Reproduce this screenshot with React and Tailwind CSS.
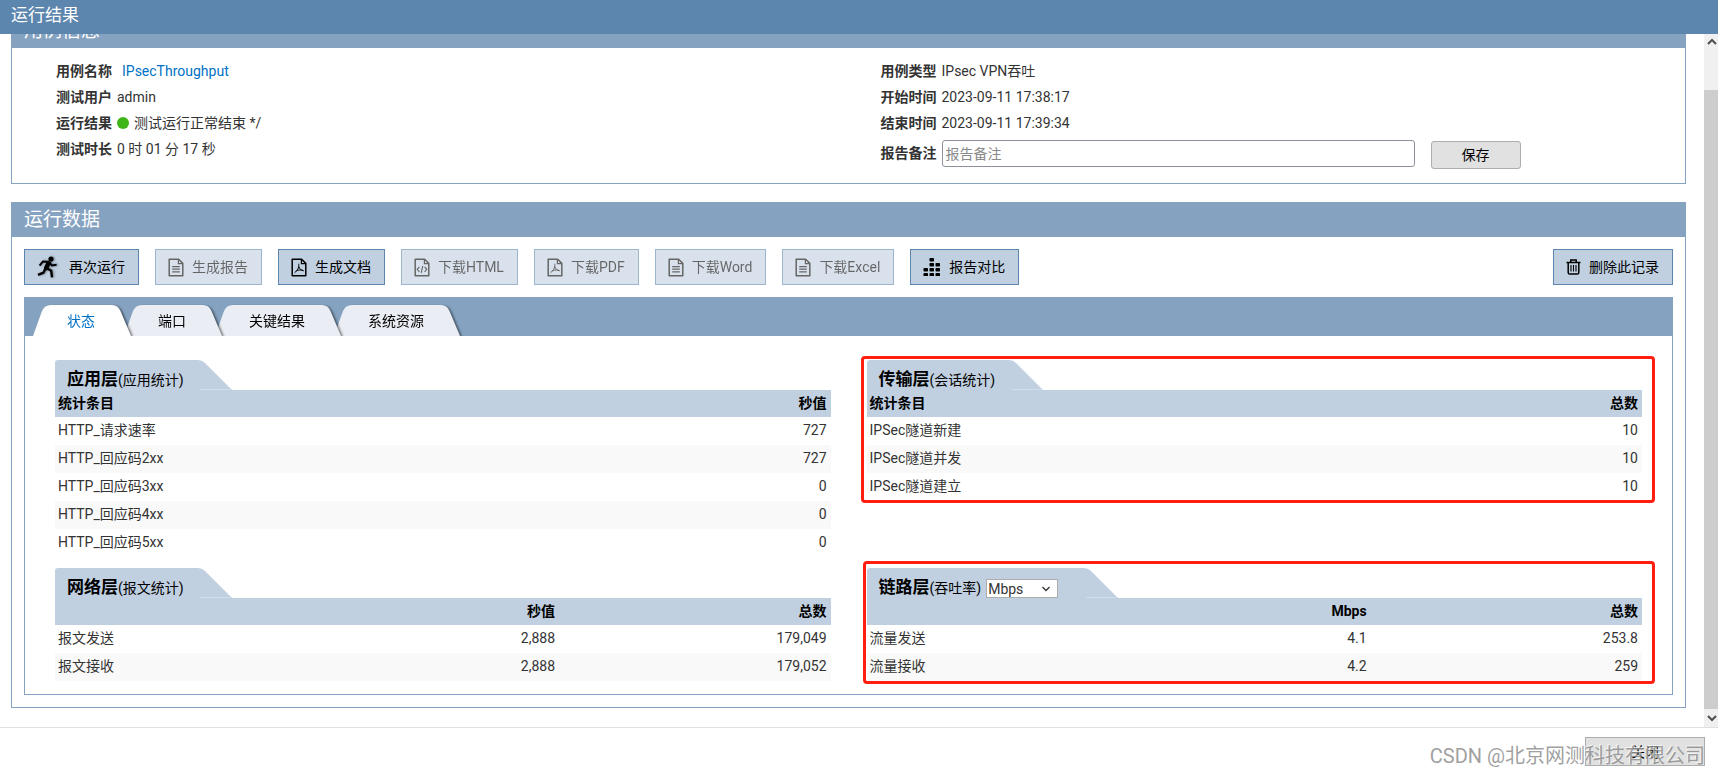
import React, { useState } from 'react';

const FileShape = ({ children }) => (
  <svg viewBox="0 0 16 19" className="h-[19px] w-4 shrink-0" fill="none" stroke="currentColor" strokeWidth="1.5">
    <path d="M1.2 1.2H10.6L14.8 5.4V17.8H1.2Z" strokeLinejoin="round" />
    <path d="M10.4 1.4V5.6H14.6" strokeWidth="1.2" />
    {children}
  </svg>
);

const DocIcon = () => (
  <FileShape>
    <path d="M4.2 8.6H11.8M4.2 11.2H11.8M4.2 13.8H11.8" strokeWidth="1.3" />
  </FileShape>
);

const PdfIcon = () => (
  <FileShape>
    <path d="M7.6 5.8C8.4 8.2 7.4 11.6 3.6 14.8M7.9 8.6C8.6 11 10.2 12.4 12.6 12.9M4.8 13.2C7 11.9 9.4 11.6 12.4 12.4" strokeWidth="1" />
  </FileShape>
);

const HtmlIcon = () => (
  <FileShape>
    <path d="M5.4 8.8L3.2 11.3L5.4 13.8M10.6 8.8L12.8 11.3L10.6 13.8M8.8 7.8L7.2 14.8" strokeWidth="1.1" />
  </FileShape>
);

const RunIcon = () => (
  <svg viewBox="0 0 24 22" className="h-[22px] w-6 shrink-0 drop-shadow-[1px_0_1px_rgba(0,0,0,0.4)]" fill="none" stroke="currentColor" strokeLinejoin="round">
    <circle cx="14" cy="3" r="2.6" fill="currentColor" stroke="none" />
    <path d="M11.6 7L9 12.2" strokeWidth="4.4" strokeLinecap="round" />
    <path d="M10.8 5.8L5.8 5.6L2.6 9.6" strokeWidth="2" />
    <path d="M12.6 6.6L14.8 9.4L19.6 8.8" strokeWidth="2" />
    <path d="M9.4 12L14.2 14.8L15 21.4" strokeWidth="2.4" />
    <path d="M8.4 12.4L6.6 16.6L1 18.8" strokeWidth="2.4" />
  </svg>
);

const bars = [[0, 10], [0, 15], [6, 0], [6, 5], [6, 10], [6, 15], [12, 5], [12, 10], [12, 15]];

const CompareIcon = () => (
  <svg viewBox="0 0 18 18" className="h-[18px] w-[18px] shrink-0" fill="currentColor">
    {bars.map(([x, y]) => (
      <rect key={`${x}-${y}`} x={x + 0.5} y={y} width="4.5" height="3.5" rx="0.8" />
    ))}
  </svg>
);

const TrashIcon = () => (
  <svg viewBox="0 0 15 16" className="h-4 w-[15px] shrink-0" fill="none" stroke="currentColor" strokeWidth="1.5">
    <path d="M0.5 3.6H14.5M4.8 3.4V1H10.2V3.4M2.2 3.8V13.4Q2.2 15 3.8 15H11.2Q12.8 15 12.8 13.4V3.8" />
    <path d="M5 6V12.6M7.5 6V12.6M10 6V12.6" strokeWidth="1.1" />
  </svg>
);

const Chevron = ({ d }) => (
  <svg viewBox="0 0 10 8" className="h-2 w-[10px]" fill="none" stroke="#505050" strokeWidth="2">
    <path d={d} />
  </svg>
);

const Panel = ({ title, children }) => (
  <section className="border border-[#85a2c0]">
    <h2 className="flex h-[34px] items-center bg-[#85a2c0] pl-3 text-[19px] text-white">{title}</h2>
    {children}
  </section>
);

const ToolButton = ({ icon, label, disabled }) => (
  <button
    disabled={disabled}
    className="flex h-9 items-center gap-2 border border-[#5c86ae] bg-[#c1d0e1] pr-[13px] pl-3 text-black disabled:opacity-60"
  >
    {icon}
    {label}
  </button>
);

const Tab = ({ label, active, onClick }) => (
  <button
    role="tab"
    aria-selected={active}
    onClick={onClick}
    className={`relative -ml-[7px] flex h-[31px] drop-shadow-[2px_1px_1px_rgba(0,0,0,0.5)] ${active ? 'text-[#0071c5]' : 'text-black'}`}
  >
    <svg viewBox="0 0 18 31" className={`h-[31px] w-[18px] ${active ? 'fill-white' : 'fill-[#eaeef4]'}`}>
      <path d="M0 31L9 6Q11.5 0 18 0V31Z" />
    </svg>
    <span className={`flex h-[31px] items-center px-4 ${active ? 'bg-white' : 'bg-[#eaeef4]'}`}>{label}</span>
    <svg viewBox="0 0 20 31" className={`h-[31px] w-5 ${active ? 'fill-white' : 'fill-[#eaeef4]'}`}>
      <path d="M0 0H1Q7 0 9.5 6L20 31H0Z" />
    </svg>
  </button>
);

const LayerTable = ({ title, note, control, columns, rows, mark }) => (
  <div className="relative self-start">
    <div className="flex h-[30px]">
      <h3 className="flex items-end rounded-tl-[3px] bg-[#c1d0e1] pl-3 text-black">
        <span className="text-[17px] leading-[22px] font-bold">{title}</span>
        <span className="leading-5">{note}</span>
        {control}
      </h3>
      <svg viewBox="0 0 48 30" className="h-[30px] w-12">
        <path d="M0 0H14Q18 0 21 3L48 30H0Z" fill="#c1d0e1" />
        <path d="M16 29.5H48" stroke="#cfdded" />
      </svg>
    </div>
    <table className="w-full table-fixed">
      <thead>
        <tr className="h-[27px] bg-[#c1d0e1] text-black">
          {columns.map((c, i) => (
            <th key={i} className="pt-0 pr-1 pb-[2px] pl-[3px] text-right font-bold first:text-left last:w-[35%]">{c}</th>
          ))}
        </tr>
      </thead>
      <tbody>
        {rows.map((row) => (
          <tr key={row[0]} className="h-7 even:bg-[#f9f9f9]">
            {row.map((cell, i) => (
              <td key={i} className="pt-0 pr-1 pb-[2px] pl-[3px] text-right first:text-left">{cell}</td>
            ))}
          </tr>
        ))}
      </tbody>
    </table>
    {mark && <div className={`pointer-events-none absolute rounded border-[3px] border-[#ff1e10] ${mark}`} />}
  </div>
);

const UnitSelect = ({ value, onChange }) => (
  <span className="relative mr-3 ml-[5px] flex">
    <select
      aria-label="吞吐率单位"
      value={value}
      onChange={(e) => onChange(e.target.value)}
      className="h-[19px] w-[72px] appearance-none border border-[#adadad] bg-white pl-px leading-4 text-[#333]"
    >
      <option>Mbps</option>
      <option>Kbps</option>
    </select>
    <svg viewBox="0 0 8 6" className="pointer-events-none absolute top-[7px] right-2 h-[6px] w-2" fill="none" stroke="#333" strokeWidth="1.3">
      <path d="M0.5 1L4 4.5L7.5 1" />
    </svg>
  </span>
);

const Field = ({ label, children }) => (
  <div className="flex h-[26px] items-center gap-[5px]">
    <span className="font-bold">{label}</span>
    {children}
  </div>
);

const tabs = ['状态', '端口', '关键结果', '系统资源'];

const App = () => {
  const [tab, setTab] = useState('状态');
  const [unit, setUnit] = useState('Mbps');

  return (
    <div className="flex h-screen flex-col bg-white font-['Roboto','Noto_Sans_CJK_SC',sans-serif] text-[14px] leading-5 text-[#333]">
      <header className="flex h-[34px] shrink-0 items-center bg-[#5c86ae] px-[11px] pb-1 text-[17px] text-white">
        <h1>运行结果</h1>
      </header>

      <div className="flex min-h-0 flex-1">
        <main className="-mt-[21px] flex-1 pr-[18px] pl-[11px] [clip-path:inset(21px_0_0_0)]">
          <Panel title="用例信息">
            <div className="grid grid-cols-2 pt-[10px] pb-[14px]">
              <div className="pl-11">
                <Field label="用例名称">
                  <a href="#case" className="ml-[5px] text-[#0071c5]">IPsecThroughput</a>
                </Field>
                <Field label="测试用户">admin</Field>
                <Field label="运行结果">
                  <span className="h-3 w-3 rounded-full bg-[#3fb618]" />
                  <span>测试运行正常结束 */</span>
                </Field>
                <Field label="测试时长">0 时 01 分 17 秒</Field>
              </div>
              <div className="pl-8">
                <Field label="用例类型">IPsec VPN吞吐</Field>
                <Field label="开始时间">2023-09-11 17:38:17</Field>
                <Field label="结束时间">2023-09-11 17:39:34</Field>
                <div className="flex items-start gap-[5px] pt-1">
                  <label htmlFor="remark" className="leading-[27px] font-bold">报告备注</label>
                  <input
                    id="remark"
                    placeholder="报告备注"
                    className="h-[27px] max-w-[473px] flex-1 rounded-[3px] border border-[#8f8f9d] px-[3px] placeholder:text-[#8a8a8a]"
                  />
                  <button className="mt-px ml-[11px] h-7 w-[90px] rounded-[3px] border border-[#adadad] bg-[#e1e1e1] text-black">保存</button>
                </div>
              </div>
            </div>
          </Panel>

          <div className="h-[18px]" />

          <Panel title="运行数据">
            <div className="p-3">
              <div className="flex gap-4">
                <ToolButton icon={<RunIcon />} label="再次运行" />
                <ToolButton icon={<DocIcon />} label="生成报告" disabled />
                <ToolButton icon={<PdfIcon />} label="生成文档" />
                <ToolButton icon={<HtmlIcon />} label="下载HTML" disabled />
                <ToolButton icon={<PdfIcon />} label="下载PDF" disabled />
                <ToolButton icon={<DocIcon />} label="下载Word" disabled />
                <ToolButton icon={<DocIcon />} label="下载Excel" disabled />
                <ToolButton icon={<CompareIcon />} label="报告对比" />
                <div className="ml-auto">
                  <ToolButton icon={<TrashIcon />} label="删除此记录" />
                </div>
              </div>

              <div className="mt-3 border border-t-0 border-[#85a2c0]">
                <div role="tablist" className="isolate flex h-[39px] items-end overflow-hidden bg-[#85a2c0] pl-[15px]">
                  {tabs.map((name, i) => (
                    <div key={name} className="relative" style={{ zIndex: tabs.length - i }}>
                      <Tab label={name} active={name === tab} onClick={() => setTab(name)} />
                    </div>
                  ))}
                </div>
                <div className="grid grid-cols-2 gap-x-9 gap-y-[11px] px-[30px] pt-6 pb-[13px]">
                  <LayerTable
                    title="应用层"
                    note="(应用统计)"
                    columns={['统计条目', '秒值']}
                    rows={[
                      ['HTTP_请求速率', '727'],
                      ['HTTP_回应码2xx', '727'],
                      ['HTTP_回应码3xx', '0'],
                      ['HTTP_回应码4xx', '0'],
                      ['HTTP_回应码5xx', '0'],
                    ]}
                  />
                  <LayerTable
                    title="传输层"
                    note="(会话统计)"
                    columns={['统计条目', '总数']}
                    rows={[
                      ['IPSec隧道新建', '10'],
                      ['IPSec隧道并发', '10'],
                      ['IPSec隧道建立', '10'],
                    ]}
                    mark="-top-1 -right-[13px] -bottom-[2px] -left-[6px]"
                  />
                  <LayerTable
                    title="网络层"
                    note="(报文统计)"
                    columns={['', '秒值', '总数']}
                    rows={[
                      ['报文发送', '2,888', '179,049'],
                      ['报文接收', '2,888', '179,052'],
                    ]}
                  />
                  <LayerTable
                    title="链路层"
                    note="(吞吐率)"
                    control={<UnitSelect value={unit} onChange={setUnit} />}
                    columns={['', unit, '总数']}
                    rows={[
                      ['流量发送', '4.1', '253.8'],
                      ['流量接收', '4.2', '259'],
                    ]}
                    mark="-top-[7px] -right-[13px] -bottom-[3px] -left-1"
                  />
                </div>
              </div>
            </div>
          </Panel>
        </main>

        <div className="flex w-[14px] flex-col items-center bg-[#f0f0f0]">
          <div className="flex h-14 pt-1 pl-[2px]">
            <Chevron d="M1 6L5 2L9 6" />
          </div>
          <div className="w-full flex-1 bg-[#cdcdcd]" />
          <div className="flex h-[18px] items-center pl-[2px]">
            <Chevron d="M1 2L5 6L9 2" />
          </div>
        </div>
      </div>

      <footer className="relative flex h-12 shrink-0 justify-end border-t border-[#e0e0e0] pt-[9px] pr-[13px]">
        <button className="h-[29px] w-[120px] border border-[#adadad] bg-[#e1e1e1] text-black">关闭</button>
        <span className="pointer-events-none absolute top-[14px] right-[13px] text-[20px] leading-7 text-[#868686]/80 [text-shadow:-1px_-1px_0_rgba(255,255,255,0.7)]">
          CSDN @北京网测科技有限公司
        </span>
      </footer>
    </div>
  );
};

export default App;
